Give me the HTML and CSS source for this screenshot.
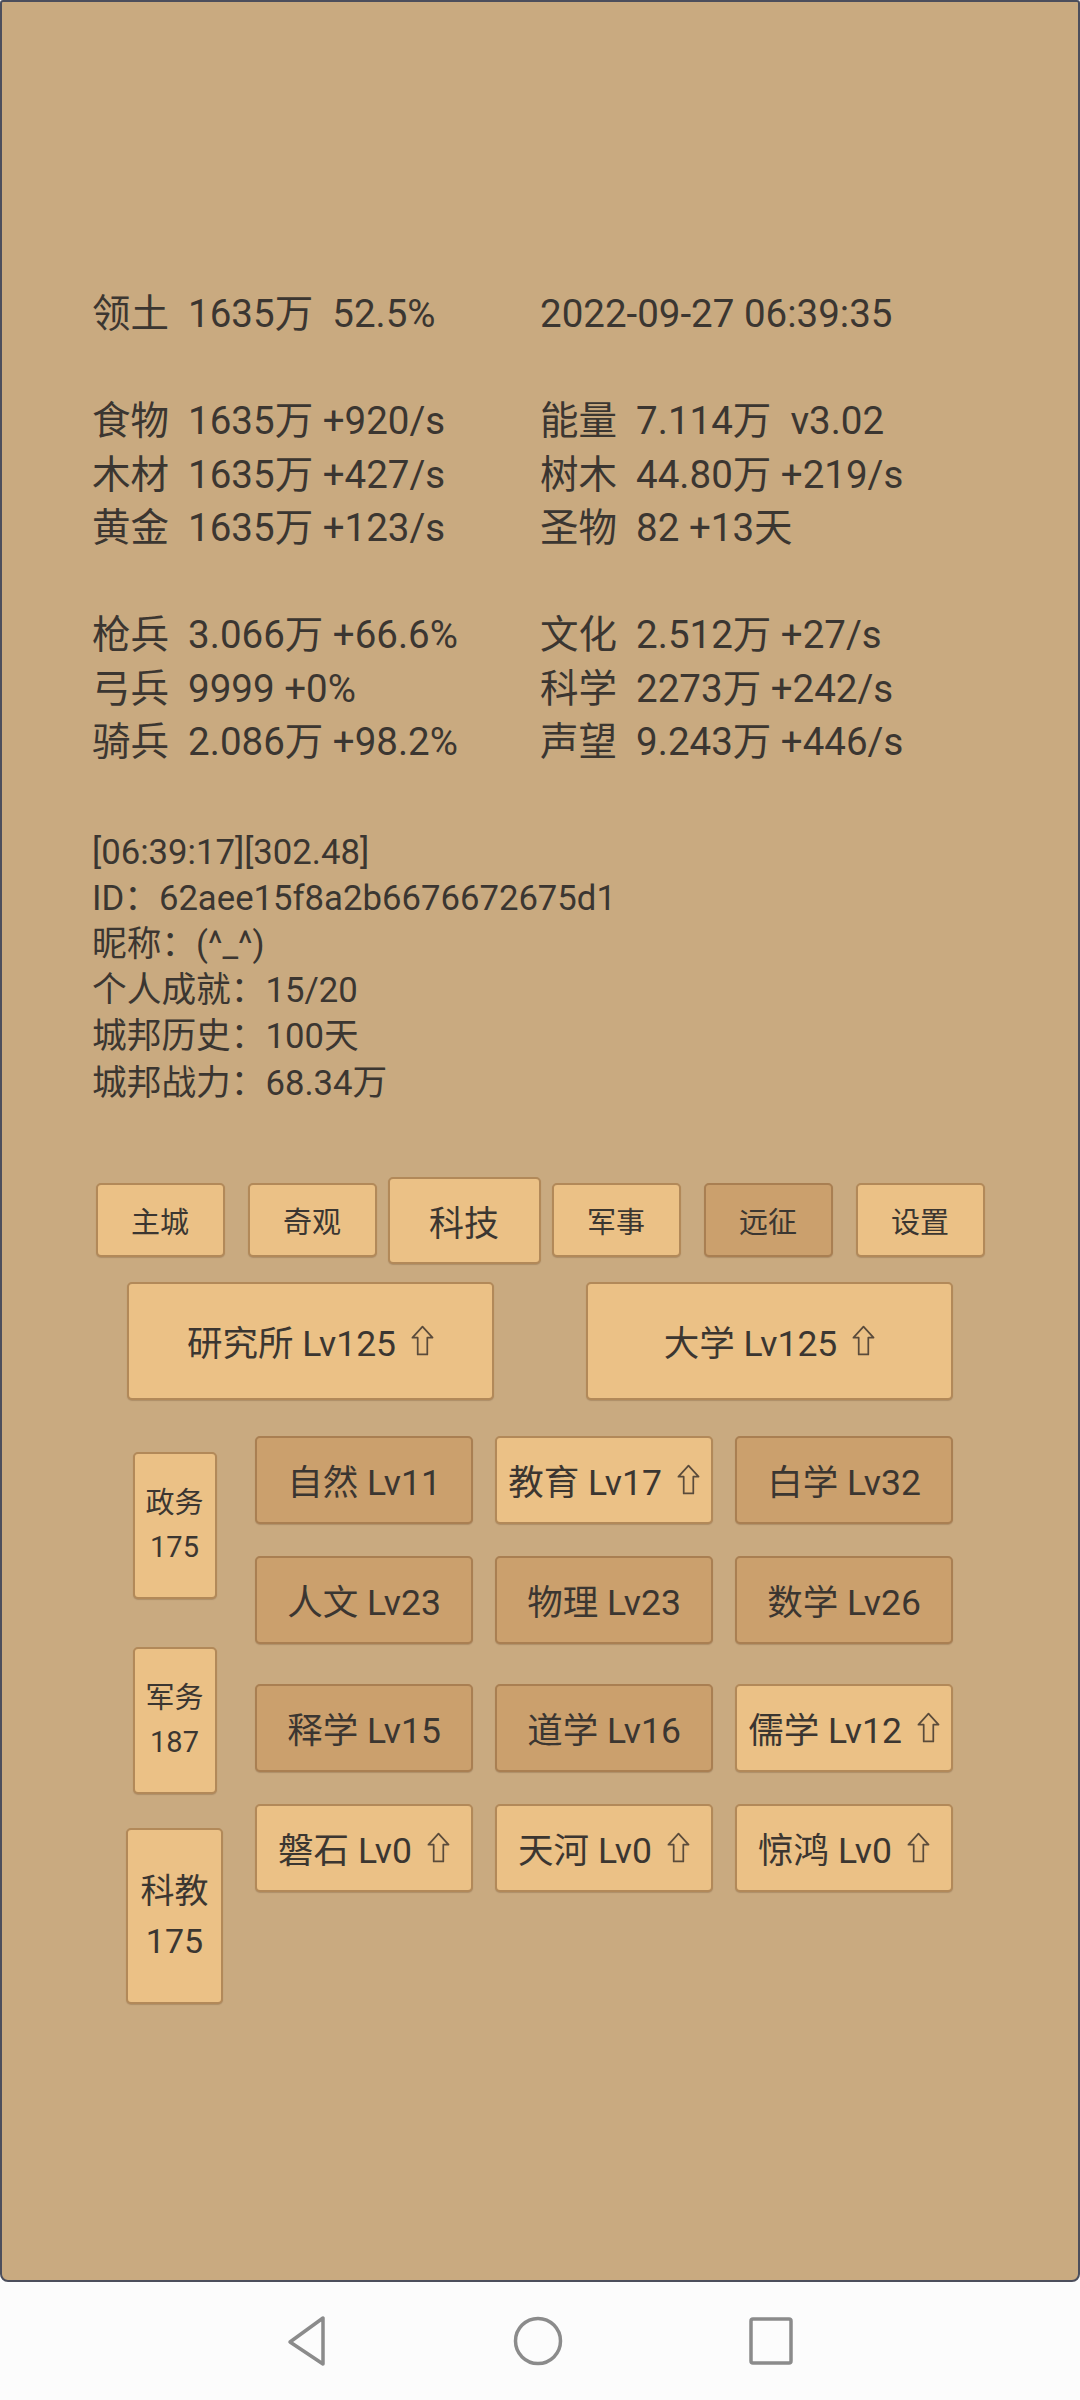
FILE: index.html
```html
<!DOCTYPE html>
<html lang="zh-CN">
<head>
    <meta charset="UTF-8">
    <meta name="viewport" content="width=device-width, initial-scale=1.0">
    <title>城邦 科技</title>
    <link rel="stylesheet" href="styles.css">
</head>
<body>
    <div class="screen">
        <div class="panel">
            <section class="stats">
                <div class="stat-group">
                    <p>领土  1635万  52.5%</p>
                    <p>2022-09-27 06:39:35</p>
                </div>
                <div class="stat-group">
                    <p>食物  1635万 +920/s</p>
                    <p>能量  7.114万  v3.02</p>
                    <p>木材  1635万 +427/s</p>
                    <p>树木  44.80万 +219/s</p>
                    <p>黄金  1635万 +123/s</p>
                    <p>圣物  82 +13天</p>
                </div>
                <div class="stat-group last">
                    <p>枪兵  3.066万 +66.6%</p>
                    <p>文化  2.512万 +27/s</p>
                    <p>弓兵  9999 +0%</p>
                    <p>科学  2273万 +242/s</p>
                    <p>骑兵  2.086万 +98.2%</p>
                    <p>声望  9.243万 +446/s</p>
                </div>
            </section>

            <section class="info">
                <p>[06:39:17][302.48]</p>
                <p>ID：62aee15f8a2b6676672675d1</p>
                <p>昵称：(^_^)</p>
                <p>个人成就：15/20</p>
                <p>城邦历史：100天</p>
                <p>城邦战力：68.34万</p>
            </section>

            <nav class="tabs">
                <div class="btn tab">主城</div>
                <div class="btn tab">奇观</div>
                <div class="btn tab active">科技</div>
                <div class="btn tab">军事</div>
                <div class="btn tab dim">远征</div>
                <div class="btn tab">设置</div>
            </nav>

            <div class="halls">
                <div class="btn hall">研究所 Lv125 <svg class="up" viewBox="0 0 24 32"><path d="M12 1.5 L22.5 13 L17 13 L17 30.5 L7 30.5 L7 13 L1.5 13 Z"/></svg></div>
                <div class="btn hall">大学 Lv125 <svg class="up" viewBox="0 0 24 32"><path d="M12 1.5 L22.5 13 L17 13 L17 30.5 L7 30.5 L7 13 L1.5 13 Z"/></svg></div>
            </div>

            <div class="tech">
                <div class="side">
                    <div class="btn dept gov">政务<br>175</div>
                    <div class="btn dept mil">军务<br>187</div>
                    <div class="btn dept sci">科教<br>175</div>
                </div>
                <div class="grid">
                    <div class="row">
                        <div class="btn cell dim">自然 Lv11</div>
                        <div class="btn cell">教育 Lv17 <svg class="up" viewBox="0 0 24 32"><path d="M12 1.5 L22.5 13 L17 13 L17 30.5 L7 30.5 L7 13 L1.5 13 Z"/></svg></div>
                        <div class="btn cell dim">白学 Lv32</div>
                    </div>
                    <div class="row r2">
                        <div class="btn cell dim">人文 Lv23</div>
                        <div class="btn cell dim">物理 Lv23</div>
                        <div class="btn cell dim">数学 Lv26</div>
                    </div>
                    <div class="row r3">
                        <div class="btn cell dim">释学 Lv15</div>
                        <div class="btn cell dim">道学 Lv16</div>
                        <div class="btn cell">儒学 Lv12 <svg class="up" viewBox="0 0 24 32"><path d="M12 1.5 L22.5 13 L17 13 L17 30.5 L7 30.5 L7 13 L1.5 13 Z"/></svg></div>
                    </div>
                    <div class="row r4">
                        <div class="btn cell">磐石 Lv0 <svg class="up" viewBox="0 0 24 32"><path d="M12 1.5 L22.5 13 L17 13 L17 30.5 L7 30.5 L7 13 L1.5 13 Z"/></svg></div>
                        <div class="btn cell">天河 Lv0 <svg class="up" viewBox="0 0 24 32"><path d="M12 1.5 L22.5 13 L17 13 L17 30.5 L7 30.5 L7 13 L1.5 13 Z"/></svg></div>
                        <div class="btn cell">惊鸿 Lv0 <svg class="up" viewBox="0 0 24 32"><path d="M12 1.5 L22.5 13 L17 13 L17 30.5 L7 30.5 L7 13 L1.5 13 Z"/></svg></div>
                    </div>
                </div>
            </div>
        </div>

        <!-- android system bar -->
        <div class="navbar">
            <svg class="nav-back" viewBox="0 0 44 52"><path d="M38 3 L38 49 L5 27 Z"/></svg>
            <svg class="nav-home" viewBox="0 0 52 52"><circle cx="26" cy="26" r="22.5"/></svg>
            <svg class="nav-recent" viewBox="0 0 48 52"><rect x="4" y="4" width="40" height="44" rx="2"/></svg>
        </div>
    </div>
</body>
</html>
```

FILE: styles.css
```css
* {
    margin: 0;
    padding: 0;
    box-sizing: border-box;
}

body {
    font-family: Roboto, "Noto Sans CJK SC", sans-serif;
    background: #fcfcfc;
    color: #3b3631;
}

.screen {
    width: 1080px;
    height: 2400px;
    display: flex;
    flex-direction: column;
}

.panel {
    height: 2282px;
    background: #c9aa80;
    border: 2px solid #4c4e5c;
    border-radius: 3px 3px 8px 8px;
}

/* resources */
.stats {
    padding: 285px 0 0 90px;
    font-size: 38.5px;
}

.stat-group {
    display: grid;
    grid-template-columns: 448px auto;
    line-height: 53.5px;
    margin-bottom: 53.5px;
}

.stat-group p {
    white-space: pre;
}

.stat-group.last {
    margin-bottom: 0;
}

.info {
    margin-top: 60px;
    padding-left: 90px;
    font-size: 34.7px;
    line-height: 46.2px;
}

/* buttons */
.btn {
    display: flex;
    align-items: center;
    justify-content: center;
    text-align: center;
    background: #ebc186;
    border: 2px solid #b28959;
    border-radius: 5px;
    box-shadow: 0 1px 1px rgba(90, 60, 30, 0.25);
    color: #3b3631;
}

.btn.dim {
    background: #cba06d;
    border-color: #a97f52;
}

.up {
    width: 23px;
    height: 31px;
    margin-left: 15px;
    fill: none;
    stroke: #5a4b3b;
    stroke-width: 1.8;
    stroke-linejoin: round;
}

.tabs {
    display: flex;
    justify-content: center;
    align-items: center;
    gap: 23px;
    margin-top: 71px;
    height: 87px;
}

.tab {
    width: 129px;
    height: 74px;
    font-size: 29px;
}

.tab.active {
    width: 153px;
    height: 87px;
    margin: 0 -12px;
    font-size: 35px;
}

.halls {
    display: flex;
    justify-content: center;
    gap: 92px;
    margin-top: 18px;
}

.hall {
    width: 367px;
    height: 118px;
    font-size: 35.5px;
}

.tech {
    display: flex;
    margin-top: 36px;
    padding-left: 124px;
}

.side {
    width: 97px;
    display: flex;
    flex-direction: column;
    align-items: center;
}

.dept {
    width: 84px;
    height: 147px;
    font-size: 29px;
    line-height: 44px;
}

.dept.gov {
    margin-top: 16px;
}

.dept.mil {
    margin-top: 48px;
}

.dept.sci {
    margin-top: 34px;
    width: 97px;
    height: 176px;
    font-size: 34px;
    line-height: 50px;
}

.grid {
    margin-left: 32px;
}

.row {
    display: flex;
    gap: 22px;
}

.row.r2 {
    margin-top: 32px;
}

.row.r3 {
    margin-top: 40px;
}

.row.r4 {
    margin-top: 32px;
}

.cell {
    width: 218px;
    height: 88px;
    font-size: 35.5px;
}

/* system bar */
.navbar {
    flex: 1;
    display: flex;
    justify-content: center;
    align-items: center;
    gap: 183px;
}

.navbar svg {
    fill: none;
    stroke: #8b8b8b;
    stroke-width: 3.5;
    stroke-linejoin: round;
}

.nav-back {
    width: 44px;
    height: 52px;
}

.nav-home {
    width: 52px;
    height: 52px;
}

.nav-recent {
    width: 48px;
    height: 52px;
}
```
